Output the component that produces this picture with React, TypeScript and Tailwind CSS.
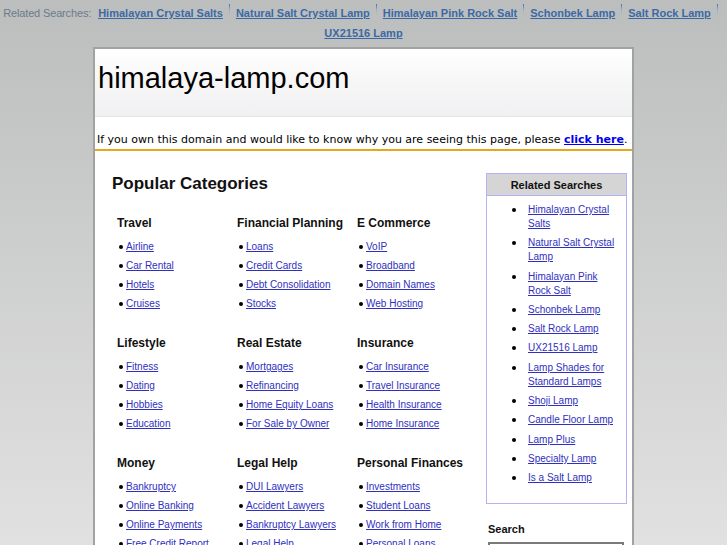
import React from 'react'

const TOP_LINKS = [
  'Himalayan Crystal Salts',
  'Natural Salt Crystal Lamp',
  'Himalayan Pink Rock Salt',
  'Schonbek Lamp',
  'Salt Rock Lamp',
  'UX21516 Lamp',
]

const CATEGORIES: { title: string; items: string[] }[] = [
  { title: 'Travel', items: ['Airline', 'Car Rental', 'Hotels', 'Cruises'] },
  { title: 'Financial Planning', items: ['Loans', 'Credit Cards', 'Debt Consolidation', 'Stocks'] },
  { title: 'E Commerce', items: ['VoIP', 'Broadband', 'Domain Names', 'Web Hosting'] },
  { title: 'Lifestyle', items: ['Fitness', 'Dating', 'Hobbies', 'Education'] },
  { title: 'Real Estate', items: ['Mortgages', 'Refinancing', 'Home Equity Loans', 'For Sale by Owner'] },
  { title: 'Insurance', items: ['Car Insurance', 'Travel Insurance', 'Health Insurance', 'Home Insurance'] },
  { title: 'Money', items: ['Bankruptcy', 'Online Banking', 'Online Payments', 'Free Credit Report'] },
  { title: 'Legal Help', items: ['DUI Lawyers', 'Accident Lawyers', 'Bankruptcy Lawyers', 'Legal Help'] },
  { title: 'Personal Finances', items: ['Investments', 'Student Loans', 'Work from Home', 'Personal Loans'] },
]

const RELATED = [
  'Himalayan Crystal Salts',
  'Natural Salt Crystal Lamp',
  'Himalayan Pink Rock Salt',
  'Schonbek Lamp',
  'Salt Rock Lamp',
  'UX21516 Lamp',
  'Lamp Shades for Standard Lamps',
  'Shoji Lamp',
  'Candle Floor Lamp',
  'Lamp Plus',
  'Specialty Lamp',
  'Is a Salt Lamp',
]

function Separator() {
  return (
    <span className="inline-block w-px h-[12px] mx-[6px] align-[1px] bg-gradient-to-b from-[#4a6f9e] via-[#9fb3c9] to-transparent" />
  )
}

export default function App() {
  return (
    <div className="min-h-[545px] w-full overflow-hidden bg-gradient-to-b from-[#bcbebd] to-[#e3e3e3] font-['Liberation_Sans',Arial,sans-serif]">
      {/* Top related searches bar */}
      <div className="px-[2px] pt-[3px] pb-[4px] text-center text-[11px] leading-[20px]">
        <span className="text-[#6a7b8d] mr-[7px] tracking-[-0.15px]">Related Searches:</span>
        {TOP_LINKS.map((l, i) => (
          <React.Fragment key={l}>
            {i > 0 && <Separator />}
            <a href="#" className="font-bold text-[#3c69a5] underline whitespace-nowrap">{l}</a>
          </React.Fragment>
        ))}
      </div>

      {/* Main box */}
      <div className="mx-auto w-[541px] min-h-[520px] border-2 border-b-0 border-[#a2a2a2] bg-white">
        {/* Header */}
        <div className="h-[68px] pl-[3px] border-b border-[#e6e6e8] bg-gradient-to-b from-white via-[#f6f6f7] to-[#f1f1f3]">
          <div className="pt-[12px] text-[29px] leading-[34px] text-black">himalaya-lamp.com</div>
        </div>
        <div className="px-[2px] pt-[15px] pb-[1px] border-b-2 border-[#e5a81c] text-[11px] leading-[16px] text-black font-['DejaVu_Sans',Verdana,sans-serif] whitespace-nowrap">
          If you own this domain and would like to know why you are seeing this page, please{' '}
          <a href="#" className="text-[#0000ee] underline font-bold">click here</a>.
        </div>

        {/* Content */}
        <div className="flex pt-[23px]">
          <div className="flex-1 pl-[17px]">
            <h1 className="text-[17px] leading-[20px] font-bold text-[#111]">Popular Categories</h1>
            <div className="grid grid-cols-[120px_120px_120px] pl-[5px] pt-[22px]">
              {CATEGORIES.map((c) => (
                <div key={c.title} className="mb-[23px]">
                  <h2 className="text-[12px] leading-[14px] font-bold text-[#111]">{c.title}</h2>
                  <ul className="mt-[7px]">
                    {c.items.map((it) => (
                      <li key={it} className="flex items-center h-[19px] text-[10px]">
                        <span className="ml-[2px] mr-[3px] w-[4px] h-[4px] rounded-full bg-black" />
                        <a href="#" className="text-[#2f2fc0] underline whitespace-nowrap">{it}</a>
                      </li>
                    ))}
                  </ul>
                </div>
              ))}
            </div>
          </div>

          {/* Sidebar */}
          <div className="w-[141px] mr-[5px] -mt-[1px]">
            <div className="border border-[#b3b3f0]">
              <div className="h-[22px] bg-[#d5d5d5] border-b border-[#b3b3f0] text-center text-[11px] leading-[22px] font-bold text-[#111]">
                Related Searches
              </div>
              <ul className="pt-[7px] pb-[12px]">
                {RELATED.map((r) => (
                  <li key={r} className="flex items-start mb-[5.3px] text-[10px] leading-[14px]">
                    <span className="ml-[25px] mt-[5px] w-[4px] h-[4px] rounded-full bg-black shrink-0" />
                    <a href="#" className="ml-[12px] w-[92px] text-[#2f2fc0] underline">{r}</a>
                  </li>
                ))}
              </ul>
            </div>
            <div className="mt-[18px] pl-[2px] text-[11px] leading-[14px] font-bold text-[#111]">Search</div>
            <div className="mt-[6px] ml-[2px] w-[136px] h-[20px] border-2 border-[#7a7a7a] bg-white" />
          </div>
        </div>
      </div>
    </div>
  )
}
